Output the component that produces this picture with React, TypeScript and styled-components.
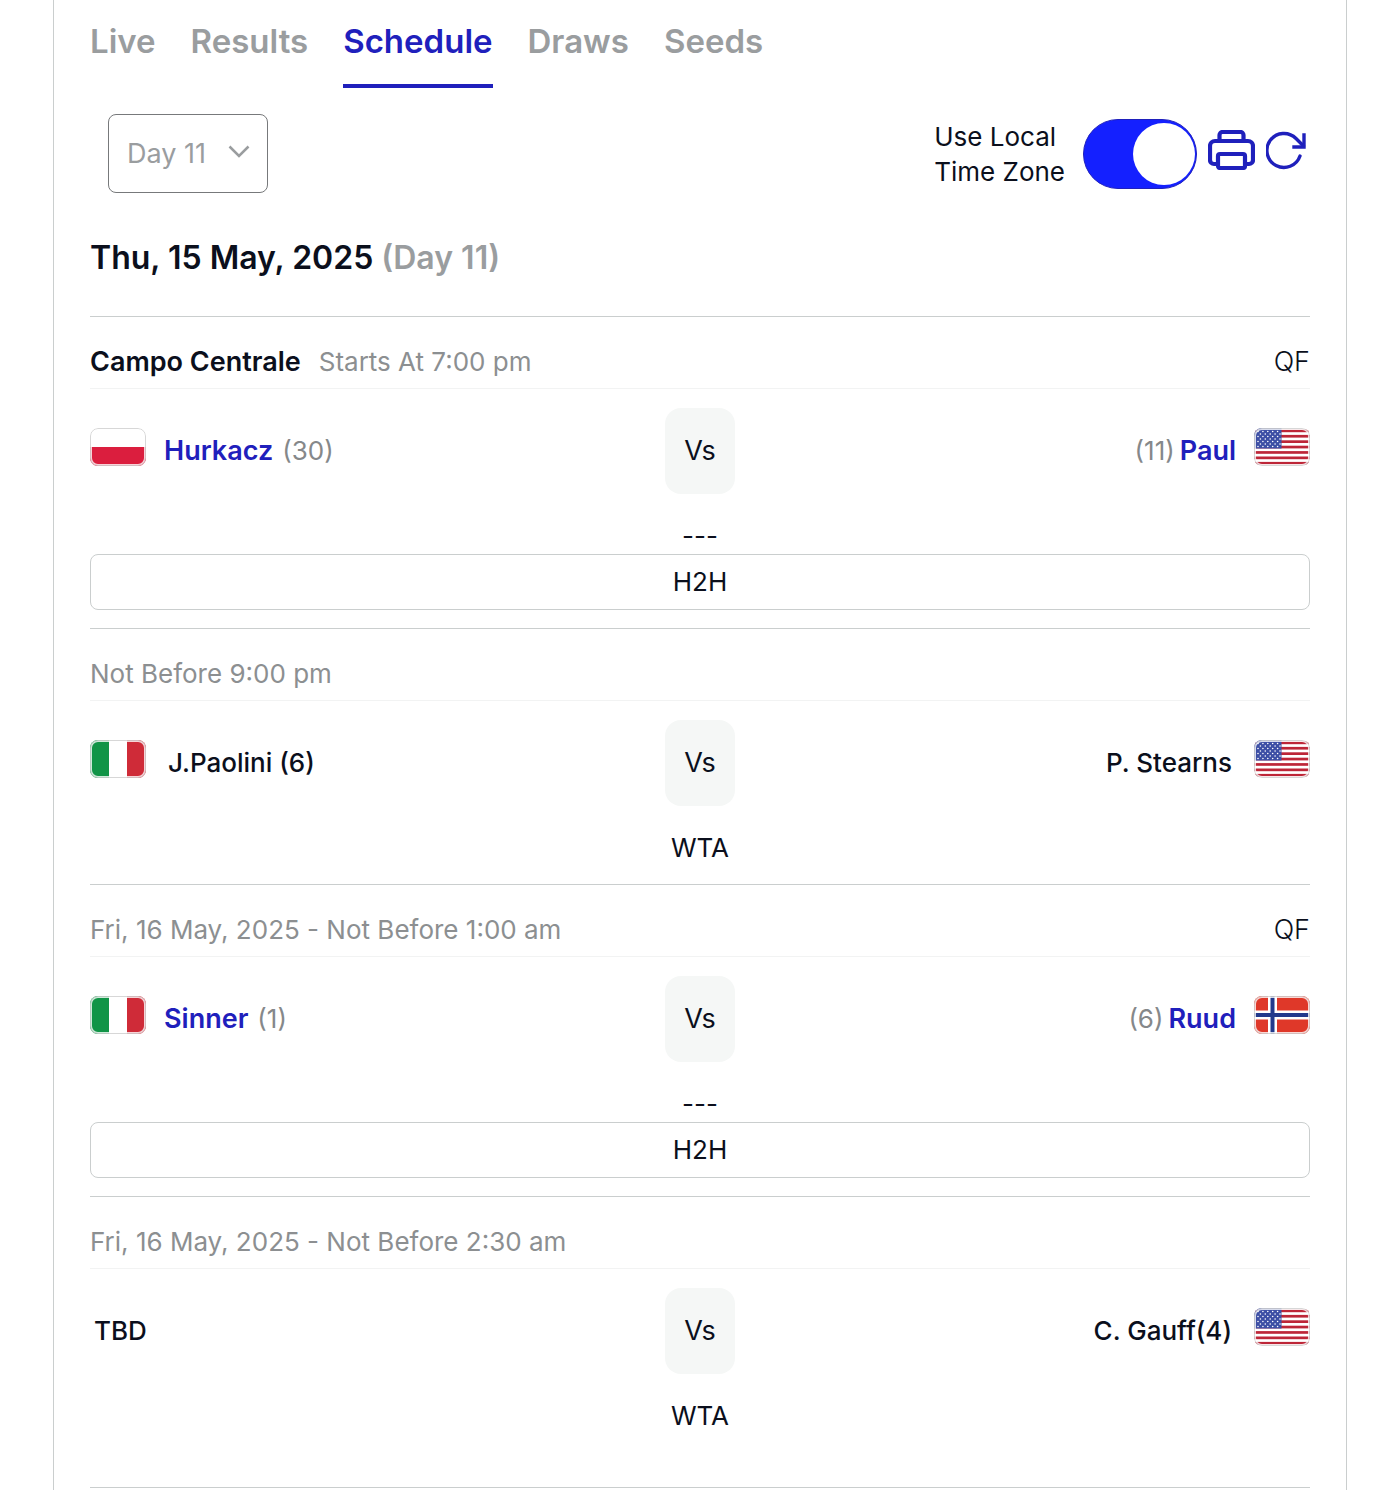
import React, { useId, useState } from "react";
import styled, { createGlobalStyle } from "styled-components";

const color = {
  ink: "#0b0f1c",
  blue: "#1f20bc",
  bright: "#1420ff",
  muted: "#9a9d9f",
  grey: "#85888a",
  rule: "#cacece",
  faint: "#f2f3f3",
  tile: "#f5f7f6",
};

const GlobalStyle = createGlobalStyle`
  *, *::before, *::after { box-sizing: border-box; }
  body {
    margin: 0;
    background: #fff;
    color: ${color.ink};
    font-family: Inter, "Liberation Sans", sans-serif;
    font-size: 26px;
    line-height: 36px;
  }
`;

const Panel = styled.main`
  min-height: 100vh;
  margin: 0 53px;
  padding: 0 36px;
  border: solid ${color.rule};
  border-width: 0 1px;
`;

const Tabs = styled.nav`
  display: flex;
  gap: 35px;
  padding-top: 20px;
`;

const Tab = styled.a<{ $active?: boolean }>`
  padding-bottom: 22px;
  border-bottom: 4px solid ${(p) => (p.$active ? color.blue : "transparent")};
  color: ${(p) => (p.$active ? color.blue : color.muted)};
  font-size: 33px;
  font-weight: 600;
  line-height: 42px;
  text-decoration: none;
`;

const Toolbar = styled.div`
  display: flex;
  justify-content: space-between;
  align-items: center;
  padding: 26px 4px 0 18px;
`;

const SelectBox = styled.div`
  position: relative;
  color: ${color.muted};
  font-size: 27px;
`;

const DaySelect = styled.select`
  display: block;
  appearance: none;
  width: 160px;
  height: 79px;
  padding: 0 18px;
  border: 1px solid #77797b;
  border-radius: 8px;
  background: #fff;
  color: inherit;
  font: inherit;
`;

const Chevron = styled.svg`
  position: absolute;
  right: 18px;
  top: 31px;
  pointer-events: none;
`;

const Tools = styled.div`
  display: flex;
  align-items: center;
  gap: 11px;
`;

const ZoneLabel = styled.label`
  padding-right: 7px;
  line-height: 35px;

  span {
    display: block;
  }
`;

const Switch = styled.input`
  appearance: none;
  display: flex;
  align-items: center;
  width: 114px;
  height: 70px;
  margin: 0;
  padding: 0 1px;
  border: 1px solid ${color.blue};
  border-radius: 35px;
  background: #b9bcc4;
  cursor: pointer;

  &::before {
    content: "";
    width: 62px;
    height: 62px;
    border-radius: 50%;
    background: #fff;
  }

  &:checked {
    justify-content: flex-end;
    background: ${color.bright};
  }
`;

const IconButton = styled.button`
  display: flex;
  margin-bottom: 7px;
  padding: 0;
  border: 0;
  background: none;
  color: ${color.blue};
  cursor: pointer;
`;

const DateHeading = styled.h1`
  margin: 0;
  padding: 44px 0 37px;
  font-size: 32px;
  font-weight: 600;
  line-height: 42px;
`;

const DayNote = styled.span`
  color: ${color.muted};
`;

const Match = styled.section<{ $last?: boolean }>`
  padding-bottom: ${(p) => (p.$last ? 53 : 18)}px;
  border-top: 1px solid ${color.rule};
`;

const MatchHeader = styled.header`
  display: flex;
  gap: 18px;
  padding: 27px 0 8px;
  border-bottom: 1px solid ${color.faint};
`;

const Court = styled.h2`
  margin: 0;
  font-size: 27px;
  font-weight: 600;
`;

const Time = styled.span`
  color: #8c8f91;
`;

const Round = styled.span`
  margin-left: auto;
  font-size: 27px;
  font-weight: 300;
`;

const Players = styled.div`
  display: grid;
  grid-template-columns: 1fr 70px 1fr;
  align-items: center;
  padding: 19px 0 24px;
`;

const Side = styled.div<{ $away?: boolean }>`
  display: flex;
  flex-direction: ${(p) => (p.$away ? "row-reverse" : "row")};
  align-items: center;
  gap: 18px;
`;

const FlagArt = styled.svg`
  display: block;
  margin-bottom: 8px;
`;

const Entry = styled.div<{ $away?: boolean }>`
  display: flex;
  flex-direction: ${(p) => (p.$away ? "row-reverse" : "row")};
  align-items: baseline;
  gap: ${(p) => (p.$away ? 5 : 9)}px;
`;

const PlayerLink = styled.a`
  color: ${color.blue};
  font-size: 27px;
  font-weight: 600;
  text-decoration: none;
`;

const PlayerName = styled.span`
  padding: 0 4px;
  font-weight: 500;
`;

const Seed = styled.span`
  color: ${color.grey};
`;

const Versus = styled.div`
  border-radius: 16px;
  background: ${color.tile};
  font-size: 27px;
  line-height: 86px;
  text-align: center;
`;

const Status = styled.div`
  text-align: center;
`;

const HeadToHead = styled.button`
  display: block;
  width: 100%;
  height: 56px;
  padding: 0;
  border: 1px solid ${color.rule};
  border-radius: 8px;
  background: #fff;
  color: inherit;
  font: inherit;
  cursor: pointer;
`;

type Country = "Poland" | "United States" | "Italy" | "Norway";

const stripes = [0, 2, 4, 6, 8, 10, 12];
const starRows = [0, 1, 2, 3, 4, 5, 6];
const starCols = [0, 1, 2, 3, 4];

const flagShapes: Record<Country, React.ReactNode> = {
  Poland: <path d="M0 19h56v19H0z" fill="#db1e3e" />,
  Italy: (
    <>
      <path d="M0 0h19v38H0z" fill="#119447" />
      <path d="M37 0h19v38H37z" fill="#cf2b38" />
    </>
  ),
  Norway: (
    <>
      <path d="M0 0h56v38H0z" fill="#df3829" />
      <path d="M14 0h9v38h-9zM0 14.500h56v9H0z" fill="#fff" />
      <path d="M16.500 0h4v38h-4zM0 17h56v4H0z" fill="#22398c" />
    </>
  ),
  "United States": (
    <>
      {stripes.map((n) => (
        <rect key={n} x="0" y={1.5 + n * 2.7} width="56" height="2.7" fill="#bd2638" />
      ))}
      <path d="M0 0h27.500v20.400H0z" fill="#3d4fa5" />
      {starRows.map((r) =>
        starCols.map((c) => (
          <circle key={`${r}-${c}`} cx={4 + c * 4.9 + (r % 2) * 2.4} cy={3.5 + r * 2.5} r="0.8" fill="#fff" />
        )),
      )}
    </>
  ),
};

function Flag({ country }: { country: Country }) {
  const clip = useId();
  return (
    <FlagArt width="56" height="38" viewBox="0 0 56 38" role="img" aria-label={country}>
      <clipPath id={clip}>
        <rect x="0" y="0" width="56" height="38" rx="8" />
      </clipPath>
      <g clipPath={`url(#${clip})`}>
        <path d="M0 0h56v38H0z" fill="#fff" />
        {flagShapes[country]}
        <rect x="1" y="1" width="54" height="36" rx="7" fill="none" stroke="#fff" strokeOpacity="0.8" strokeWidth="2" />
        <rect x="0.5" y="0.5" width="55" height="37" rx="7.500" fill="none" stroke="#9a9a9a" strokeOpacity="0.4" />
      </g>
    </FlagArt>
  );
}

interface Player {
  name: string;
  seed?: string;
  country?: Country;
  linked?: boolean;
}

interface MatchData {
  court?: string;
  time: string;
  round?: string;
  home: Player;
  away: Player;
  status: string;
  h2h?: boolean;
}

const matches: MatchData[] = [
  {
    court: "Campo Centrale",
    time: "Starts At 7:00 pm",
    round: "QF",
    home: { name: "Hurkacz", seed: "(30)", country: "Poland", linked: true },
    away: { name: "Paul", seed: "(11)", country: "United States", linked: true },
    status: "---",
    h2h: true,
  },
  {
    time: "Not Before 9:00 pm",
    home: { name: "J.Paolini (6)", country: "Italy" },
    away: { name: "P. Stearns", country: "United States" },
    status: "WTA",
  },
  {
    time: "Fri, 16 May, 2025 - Not Before 1:00 am",
    round: "QF",
    home: { name: "Sinner", seed: "(1)", country: "Italy", linked: true },
    away: { name: "Ruud", seed: "(6)", country: "Norway", linked: true },
    status: "---",
    h2h: true,
  },
  {
    time: "Fri, 16 May, 2025 - Not Before 2:30 am",
    home: { name: "TBD" },
    away: { name: "C. Gauff(4)", country: "United States" },
    status: "WTA",
  },
];

function PlayerSide({ player, away }: { player: Player; away?: boolean }) {
  return (
    <Side $away={away}>
      {player.country && <Flag country={player.country} />}
      <Entry $away={away}>
        {player.linked ? <PlayerLink href="#">{player.name}</PlayerLink> : <PlayerName>{player.name}</PlayerName>}
        {player.seed && <Seed>{player.seed}</Seed>}
      </Entry>
    </Side>
  );
}

const tabs = ["Live", "Results", "Schedule", "Draws", "Seeds"];

export default function App() {
  const [local, setLocal] = useState(true);
  return (
    <>
      <GlobalStyle />
      <Panel>
        <Tabs>
          {tabs.map((t) => (
            <Tab key={t} href="#" $active={t === "Schedule"}>
              {t}
            </Tab>
          ))}
        </Tabs>
        <Toolbar>
          <SelectBox>
            <DaySelect aria-label="Day" defaultValue="Day 11">
              <option>Day 11</option>
            </DaySelect>
            <Chevron width="22" height="14" viewBox="0 0 22 14" fill="none" stroke="currentColor" strokeWidth="2.500">
              <path d="M1.500 1.500 11 11l9.500-9.500" />
            </Chevron>
          </SelectBox>
          <Tools>
            <ZoneLabel htmlFor="local-zone">
              <span>Use Local</span> <span>Time Zone</span>
            </ZoneLabel>
            <Switch id="local-zone" type="checkbox" checked={local} onChange={(e) => setLocal(e.target.checked)} />
            <IconButton aria-label="Print">
              <svg width="47" height="40" viewBox="0 0 47 40" fill="none" stroke="currentColor" strokeWidth="4.200" strokeLinejoin="round">
                <path d="M11.500 11V5a3 3 0 0 1 3-3h18a3 3 0 0 1 3 3v6" />
                <path d="M10 34H6a4 4 0 0 1-4-4V16a5 5 0 0 1 5-5h33a5 5 0 0 1 5 5v14a4 4 0 0 1-4 4h-4" />
                <rect x="10" y="24" width="27" height="14" rx="2" />
              </svg>
            </IconButton>
            <IconButton aria-label="Refresh">
              <svg width="40" height="40" viewBox="0 0 40 40" fill="none" stroke="currentColor" strokeWidth="3.400" strokeLinecap="round">
                <path d="M34 26A17 17 0 1 1 30 8.500L37.500 16" />
                <path d="M38 5v12H28" strokeLinecap="square" />
              </svg>
            </IconButton>
          </Tools>
        </Toolbar>
        <DateHeading>
          Thu, 15 May, 2025 <DayNote>(Day 11)</DayNote>
        </DateHeading>
        {matches.map((m, i) => (
          <Match key={m.time} $last={i === matches.length - 1}>
            <MatchHeader>
              {m.court && <Court>{m.court}</Court>}
              <Time>{m.time}</Time>
              {m.round && <Round>{m.round}</Round>}
            </MatchHeader>
            <Players>
              <PlayerSide player={m.home} />
              <Versus>Vs</Versus>
              <PlayerSide player={m.away} away />
            </Players>
            <Status>{m.status}</Status>
            {m.h2h && <HeadToHead type="button">H2H</HeadToHead>}
          </Match>
        ))}
        <Match as="div" />
      </Panel>
    </>
  );
}
